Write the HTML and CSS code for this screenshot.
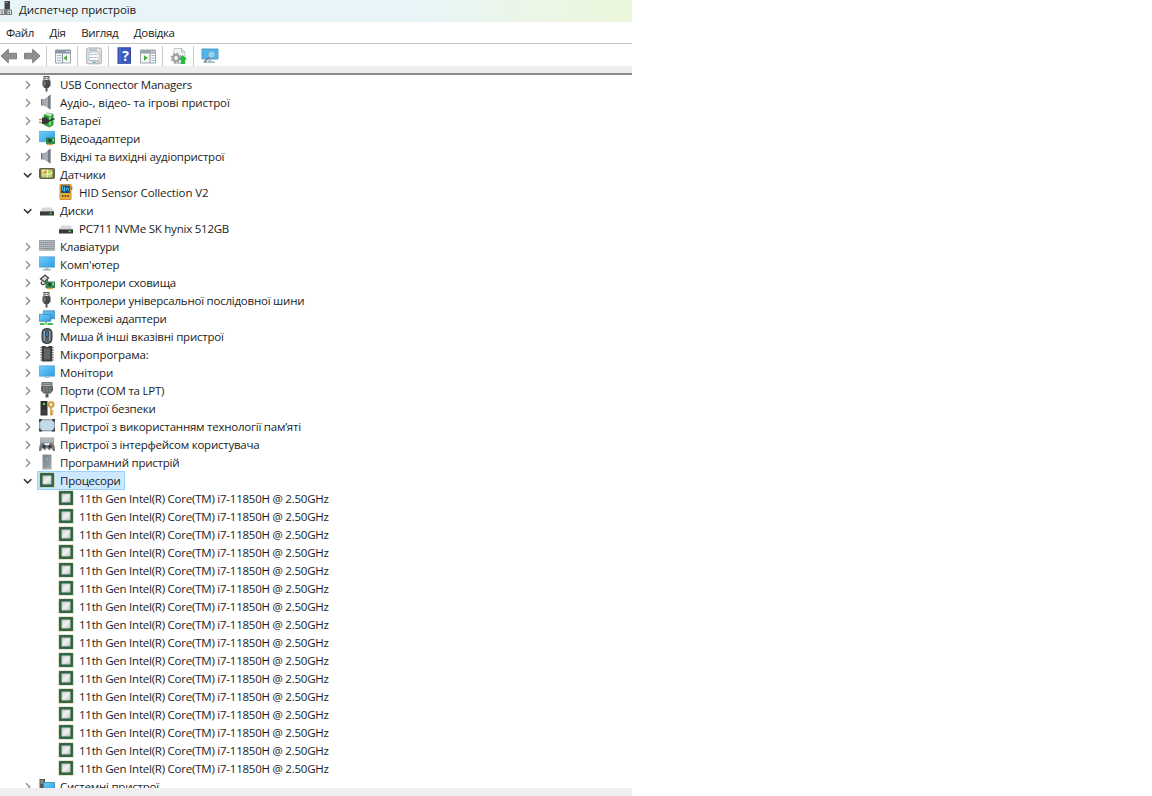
FILE: index.html
```html
<!DOCTYPE html>
<html lang="uk">
<head>
    <meta charset="UTF-8">
    <meta name="viewport" content="width=device-width, initial-scale=1.0">
    <title>Диспетчер пристроїв</title>
    <link rel="stylesheet" href="styles.css">
</head>
<body>
    <!-- Icon sprite -->
    <svg class="sprite">
        <defs>
            <linearGradient id="screen" x1="0" y1="0" x2="1" y2="1">
                <stop offset="0" stop-color="#6ccdfb"/><stop offset="1" stop-color="#2d9fe8"/>
            </linearGradient>
            <linearGradient id="metal" x1="0" y1="0" x2="1" y2="1">
                <stop offset="0" stop-color="#7d868c"/><stop offset=".5" stop-color="#89939a"/><stop offset="1" stop-color="#a5adb2"/>
            </linearGradient>
            <linearGradient id="die" x1="0" y1="0" x2="1" y2="1">
                <stop offset="0" stop-color="#cfd3d2"/><stop offset=".5" stop-color="#f0f2f1"/><stop offset="1" stop-color="#c3c8c6"/>
            </linearGradient>
        </defs>
        <symbol id="closed" viewBox="0 0 10 10"><path d="M3 1.300 6.800 5 3 8.700" fill="none" stroke="#8c8c8c" stroke-width="1.300"/></symbol>
        <symbol id="open" viewBox="0 0 10 10"><path d="M1 3.200 4.700 6.900l3.700-3.700" fill="none" stroke="#333" stroke-width="1.500"/></symbol>
        <symbol id="usb" viewBox="0 0 16 16">
            <rect x="5" y=".5" width="5" height="4" fill="#ddd" stroke="#555"/><path d="M6 2h1v1H6zM8.100 2h1v1h-1z" fill="#444"/>
            <path d="M3.500 4.500h8v5l-2 2.500h-4l-2-2.500z" fill="#4a4a4c"/><path d="M4.500 5h2v5h-2z" fill="#77797b"/><path d="M6.500 12h2v3.500h-2z" fill="#555"/>
        </symbol>
        <symbol id="speaker" viewBox="0 0 16 16">
            <path d="M2 5h4v6.500H2z" fill="#697078"/><path d="M5 5.500 11.500.5v15L5 11.500z" fill="#a8aeb3"/><path d="M9 2.500 11.500.5v15L9 14z" fill="#737b82"/>
            <path d="M4 5v6.500" stroke="#d5d9dc"/>
        </symbol>
        <symbol id="battery" viewBox="0 0 16 16">
            <path d="M4.500 3 8.500.5l6 1.500v11L10.500 15.500 5 13z" fill="#2fa13c"/><path d="M6 2.500 8.500.8l5 1.700-2.500 1.800z" fill="#d9e4da"/><path d="M10 5v9l2-1V4z" fill="#7bdc6b"/>
            <path d="M3 5.500h5l2.500 3-2.500 3.500H3z" fill="#38383a"/><path d="M0 7.500h3M0 10.500h3" stroke="#b49a4c" stroke-width="1.500"/><path d="M9 9c4 0 2-2.500 6.500-2" fill="none" stroke="#333" stroke-width="1.500"/>
        </symbol>
        <symbol id="display" viewBox="0 0 16 16">
            <path d="M.3 1.300h15.400v10.400H.3z" fill="url(#screen)" stroke="#4a94c0" stroke-width=".6"/>
            <path d="M7 7.500h9V14H7z" fill="#2e8550"/><path d="M9.500 9h3v3h-3z" fill="#19482b"/><path d="M13.500 8.500h1.500v3h-1.500z" fill="#9bd38b"/><path d="M8 14.500h6" stroke="#d0a83b" stroke-width="1.400"/>
        </symbol>
        <symbol id="sensors" viewBox="0 0 16 16">
            <rect x=".5" y="2.500" width="15" height="10" rx="1" fill="#716650" stroke="#625a49"/><path d="M2.500 3.500h11v8h-11z" fill="#b4cf6b"/>
            <path d="M2.500 3.500h4v3h-4z" fill="#efe08a"/><path d="M2.500 9 7 7.500l3 1 3.500-2M8.500 3.500v8" fill="none" stroke="#f6f0a0" stroke-width="1.200"/><circle cx="6" cy="6.500" r="1.100" fill="#d7533a"/>
        </symbol>
        <symbol id="hid" viewBox="0 0 16 16">
            <path d="M2 .5h11v15H2z" fill="#e9ae39" stroke="#c79540"/><path d="M3 1.500h9v7.500H3z" fill="#164f83"/><path d="M4.500 2.500v3.500l2 1V3M8 6.500l1.500-3 1.500 3" fill="none" stroke="#52c8f4"/>
            <path d="M4 11h1.500v2H4zM6.700 11h1.500v2H6.700zM9.300 11h1.500v2H9.300z" fill="#66501f"/><path d="M13.800 2v4" stroke="#596775"/>
        </symbol>
        <symbol id="disk" viewBox="0 0 16 16">
            <path d="M3.500 5.500h9l2.500 4H1z" fill="#d5d7d8"/><path d="M1 9h14v4.500H1z" fill="#39393b"/><path d="M1 9h14v.8H1z" fill="#8b8d8f"/><path d="M10.500 10.800h2.500v1.400h-2.500z" fill="#49d34a"/>
        </symbol>
        <symbol id="keyboard" viewBox="0 0 16 16">
            <path d="M.4 2.500h15.200v9.700H.4z" fill="#b4bbc1" stroke="#89929a" stroke-width=".8"/><path d="M1.500 4.500h13M1.500 6.500h13M1.500 8.500h13" stroke="#848e96" stroke-dasharray="1.500 .5"/><path d="M1.500 10.500h2M4.500 10.500h7M12.500 10.500h2" stroke="#848e96"/>
        </symbol>
        <symbol id="computer" viewBox="0 0 16 16">
            <path d="M.3 .8h15.400v10.400H.3z" fill="url(#screen)" stroke="#4a94c0" stroke-width=".6"/><path d="M6.500 11.500h3v2h-3z" fill="#abc4d2"/><path d="M4 13.800h8" stroke="#8da9b8" stroke-width="1.300"/>
        </symbol>
        <symbol id="storage" viewBox="0 0 16 16">
            <path d="m1.500 5 4.500-4 3.500 3-4 4z" fill="#d8dada" stroke="#414446" stroke-width="1.300"/><path d="M3 7.500c-2 2 0 4 2.500 2.500L9 6.500" fill="none" stroke="#414446" stroke-width="1.300"/>
            <path d="M6.500 7.500H16V14H6.500z" fill="#2f8550"/><path d="M9.500 9h2.500v3H9.500z" fill="#16432a"/><path d="M13.300 8.500h1.500v3h-1.500z" fill="#9bd38b"/><path d="M7.500 14.500H14" stroke="#d0a83b" stroke-width="1.400"/>
        </symbol>
        <symbol id="network" viewBox="0 0 16 16">
            <path d="M4.300.8h11.400v7.900H4.300z" fill="url(#screen)" stroke="#367da7" stroke-width=".7"/><path d="M.4 4.300h11.300v7H.4z" fill="url(#screen)" stroke="#367da7" stroke-width=".7"/>
            <path d="M6 11.500h2V14H6z" fill="#6cb86b"/><path d="M1 14h13" stroke="#31b64b" stroke-width="1.800"/><path d="M5 14h4" stroke="#8ee08d" stroke-width="2"/>
        </symbol>
        <symbol id="mouse" viewBox="0 0 16 16">
            <rect x="3" y=".6" width="10" height="14.800" rx="4" fill="#5d656d" stroke="#363a3f"/><path d="M5.300 3v9.500M10.700 3v9.500" stroke="#a8b3bd"/><rect x="6.800" y="2.500" width="2.400" height="6.500" rx="1.200" fill="#4289c2" stroke="#252b32" stroke-width=".7"/>
        </symbol>
        <symbol id="firmware" viewBox="0 0 16 16">
            <path d="M1.500 1.500h13M1.500 4h13M1.500 6.500h13M1.500 9h13M1.500 11.500h13M1.500 14h13" stroke="#666" stroke-width="1.600"/><path d="M3 0h3l1 1h2l1-1h3v15.500H3z" fill="#3d3e40"/><path d="M5 2.500h6v11H5z" fill="#626466"/>
        </symbol>
        <symbol id="monitor" viewBox="0 0 16 16">
            <path d="M.3 1.800h15.400v10.400H.3z" fill="url(#screen)" stroke="#4a94c0" stroke-width=".6"/><path d="M5 13.300h6" stroke="#a9bbc5"/>
        </symbol>
        <symbol id="port" viewBox="0 0 16 16">
            <path d="M3 .7h10v4H3z" fill="#b2b5b7" stroke="#515456"/><path d="M4.500 2.500h7" stroke="#444" stroke-dasharray="1 1"/><path d="M2 4.500h12v4l-2.500 3h-7L2 8.500z" fill="#626567"/><path d="M5 5v5M8 5v5M11 5v5" stroke="#898d90"/><path d="M6.500 11.500h3V15.500h-3z" fill="#55585a"/>
        </symbol>
        <symbol id="security" viewBox="0 0 16 16">
            <path d="M1.500 1h7v14.500h-7z" fill="#303234"/><path d="M4 3h2v2H4z" fill="#42e04c"/><path d="M2.500 11h5M2.500 13h5" stroke="#555"/>
            <circle cx="12" cy="4.500" r="2.400" fill="none" stroke="#d1a44a" stroke-width="2.400"/><path d="M12 7v8.500M12 11.500h2.500M12 14h2" stroke="#d1a44a" stroke-width="1.800"/>
        </symbol>
        <symbol id="memory" viewBox="0 0 16 16">
            <rect x=".7" y="1.800" width="14.600" height="11" rx="1.500" fill="#c2dcec" stroke="#7c8a94"/><path d="M.8 4V1.800H3M13 1.800h2.200V4M15.200 10.500v2.300H13M3 12.800H.8v-2.300" fill="none" stroke="#2e3439" stroke-width="1.400"/>
        </symbol>
        <symbol id="interface" viewBox="0 0 16 16">
            <path d="M1 1.500h14v6H1z" fill="#9ba3a9"/><path d="M2 3h12M2 5h12" stroke="#dde0e2" stroke-dasharray="1.300 .8"/><path d="M0 15c0-5 1-8 3-8h2l1 2h4l1-2h2c2 0 3 3 3 8h-2l-1.500-3-2 2.500L8 12l-2.500 2.500-2-2.500L2 15z" fill="#72797f"/>
            <circle cx="5" cy="10.500" r="1.700" fill="#373b3f"/><circle cx="11" cy="10.500" r="1.700" fill="#373b3f"/><path d="M13 8.500h1.500V10H13z" fill="#d86547"/>
        </symbol>
        <symbol id="software" viewBox="0 0 16 16">
            <path d="M3.500.5h9v15h-9z" fill="url(#metal)"/><path d="M3.500 15h9" stroke="#c3c9cd"/><path d="M7.300 4.500h1.500V6H7.300z" fill="#61ddd3"/>
        </symbol>
        <symbol id="cpu" viewBox="0 0 16 16">
            <path d="M1 1h14v14H1z" fill="#2d6a48" stroke="#bda859" stroke-width="1.200" stroke-dasharray="1 .6"/><path d="M1.200 1.200h13.600v13.600H1.200z" fill="#2c6546"/><path d="M3.800 3.800h8.400v8.400H3.800z" fill="url(#die)" stroke="#a2b3a7" stroke-width=".7"/>
        </symbol>
        <symbol id="system" viewBox="0 0 16 16">
            <path d="M.5 1H6v13H.5z" fill="#55585b"/><path d="M1.500 3h3M1.500 5h3" stroke="#b6babd"/><path d="M4.500 4.500h11v8h-11z" fill="url(#screen)" stroke="#337eac" stroke-width=".8"/>
        </symbol>
        <symbol id="back" viewBox="0 0 18 18"><path d="M1 9 8.300 2.300v4H16.500v5.500H8.300v4z" fill="#8f8f8f" stroke="#7c7c7c"/></symbol>
        <symbol id="forward" viewBox="0 0 18 18"><path d="M17 9 9.700 2.300v4H1.500v5.500h8.200v4z" fill="#8f8f8f" stroke="#7c7c7c"/></symbol>
        <symbol id="tree" viewBox="0 0 18 18">
            <path d="M1.500 3h15v13h-15z" fill="#f4f5f5" stroke="#a0a6ac"/><path d="M1 3h16v3.500H1z" fill="#8796a5"/><path d="M12 4.500h1.500M14.500 4.500H16" stroke="#eee"/><path d="M3 8.500h4M3 11h4M3 13.500h4" stroke="#a9bac6"/><path d="M8.500 6.500V16" stroke="#8b9299"/><path d="M13 8.200v5.500L9.500 11z" fill="#45a83b"/>
        </symbol>
        <symbol id="panel" viewBox="0 0 18 18">
            <path d="M1.500 3h15v13h-15z" fill="#f4f5f5" stroke="#a0a6ac"/><path d="M1 3h16v3.500H1z" fill="#9ba4ac"/><path d="M12 4.500h1.500M14.500 4.500H16" stroke="#eee"/><path d="M12.500 8.500h3M12.500 11h3M12.500 13.500h3" stroke="#a9bac6"/><path d="M11 6.500V16" stroke="#8b9299"/><path d="M5 8.200v5.500L8.800 11z" fill="#45a83b"/>
        </symbol>
        <symbol id="properties" viewBox="0 0 18 18">
            <rect x="1.700" y="1" width="14.600" height="15.800" rx="1.500" fill="#e6e8ea" stroke="#a4a9ad"/><path d="M4 5h10v8.500H4z" fill="#fff" stroke="#b5bbc0"/><path d="M4 3h8" stroke="#9ba1a6"/><path d="M5.500 7.500h2M5.500 10.500h2" stroke="#58a6be"/><path d="M8.500 7.500h4M8.500 10.500h4" stroke="#b4babf"/><path d="M7.500 15.200h3" stroke="#5bb0cc" stroke-width="1.500"/><path d="M11.500 15.200h3" stroke="#b3bcc1" stroke-width="1.500"/>
        </symbol>
        <symbol id="help" viewBox="0 0 18 18">
            <rect x="2" y=".8" width="12.500" height="15.500" fill="#3b5bc0" stroke="#2f4aa5"/><path d="M4 1v15" stroke="#5e79cf"/>
        </symbol>
        <symbol id="update" viewBox="0 0 18 18">
            <path d="M4 1.500h7.500L15 5v11.500H4z" fill="#f5f5f5" stroke="#c5c8ca"/><path d="M11.500 1.500V5H15" fill="none" stroke="#b5b8ba"/><circle cx="6" cy="11" r="3.100" fill="none" stroke="#a0a3a5" stroke-width="2.300"/><circle cx="6" cy="11" r="4.700" fill="none" stroke="#a0a3a5" stroke-width="1.500" stroke-dasharray="1.900 1.790"/><path d="m12.800 8 4.500 4.500H15V17h-4.200v-4.500H8.500z" fill="#28b843"/>
        </symbol>
        <symbol id="scan" viewBox="0 0 18 18">
            <path d="M1 2h16v10H1z" fill="#4fb5ea" stroke="#4f9cc8"/><path d="M7.500 12.500h3v2h-3zM4 14.500h10V16H4z" fill="#a3bcc9"/><circle cx="10.500" cy="7.500" r="3.600" fill="#8fd5f6" stroke="#6fa6c2"/><path d="M7.800 10.300 3 15.500" stroke="#677f8d" stroke-width="1.600"/>
        </symbol>
        <symbol id="app" viewBox="0 0 14 18">
            <path d="M4.500 1h5.500v8.500H4.500z" fill="#424548"/><path d="M5.500 2.500h2" stroke="#aaa"/><path d="M7 9v3" stroke="#777" stroke-width="2"/><path d="M0 9.500h12v5.500H0z" fill="#777b7e"/><path d="M0 10.500h4v3.500H0zM7.500 10.500h3.500v3.500H7.500z" fill="#e0e2e3"/><path d="M1.500 11.500h1v2h-1zM8.700 11.500h1v2h-1z" fill="#333"/>
        </symbol>
    </svg>

    <div class="window">
        <div class="titlebar">
            <svg class="app-icon"><use href="#app"/></svg>
            <span class="title">Диспетчер пристроїв</span>
        </div>
        <div class="menubar">
            <span>Файл</span>
            <span>Дія</span>
            <span>Вигляд</span>
            <span>Довідка</span>
        </div>
        <div class="toolbar">
            <svg class="tool"><use href="#back"/></svg>
            <svg class="tool next"><use href="#forward"/></svg>
            <i class="separator"></i>
            <svg class="tool"><use href="#tree"/></svg>
            <i class="separator"></i>
            <svg class="tool"><use href="#properties"/></svg>
            <i class="separator"></i>
            <span class="tool help"><svg><use href="#help"/></svg><b>?</b></span>
            <svg class="tool next"><use href="#panel"/></svg>
            <i class="separator"></i>
            <svg class="tool"><use href="#update"/></svg>
            <i class="separator"></i>
            <svg class="tool"><use href="#scan"/></svg>
        </div>
        <div class="strip"></div>

        <ul class="tree">
            <li class="row"><svg class="arrow"><use href="#closed"/></svg><svg class="icon"><use href="#usb"/></svg><span>USB Connector Managers</span></li>
            <li class="row"><svg class="arrow"><use href="#closed"/></svg><svg class="icon"><use href="#speaker"/></svg><span class="loose">Аудіо-, відео- та ігрові пристрої</span></li>
            <li class="row"><svg class="arrow"><use href="#closed"/></svg><svg class="icon"><use href="#battery"/></svg><span class="loose">Батареї</span></li>
            <li class="row"><svg class="arrow"><use href="#closed"/></svg><svg class="icon"><use href="#display"/></svg><span>Відеоадаптери</span></li>
            <li class="row"><svg class="arrow"><use href="#closed"/></svg><svg class="icon"><use href="#speaker"/></svg><span>Вхідні та вихідні аудіопристрої</span></li>
            <li class="row"><svg class="arrow"><use href="#open"/></svg><svg class="icon"><use href="#sensors"/></svg><span>Датчики</span></li>
            <li class="row child"><svg class="icon"><use href="#hid"/></svg><span class="loose">HID Sensor Collection V2</span></li>
            <li class="row"><svg class="arrow"><use href="#open"/></svg><svg class="icon"><use href="#disk"/></svg><span class="loose">Диски</span></li>
            <li class="row child"><svg class="icon"><use href="#disk"/></svg><span>PC711 NVMe SK hynix 512GB</span></li>
            <li class="row"><svg class="arrow"><use href="#closed"/></svg><svg class="icon"><use href="#keyboard"/></svg><span>Клавіатури</span></li>
            <li class="row"><svg class="arrow"><use href="#closed"/></svg><svg class="icon"><use href="#computer"/></svg><span class="loose">Комп'ютер</span></li>
            <li class="row"><svg class="arrow"><use href="#closed"/></svg><svg class="icon"><use href="#storage"/></svg><span>Контролери сховища</span></li>
            <li class="row"><svg class="arrow"><use href="#closed"/></svg><svg class="icon"><use href="#usb"/></svg><span>Контролери універсальної послідовної шини</span></li>
            <li class="row"><svg class="arrow"><use href="#closed"/></svg><svg class="icon"><use href="#network"/></svg><span>Мережеві адаптери</span></li>
            <li class="row"><svg class="arrow"><use href="#closed"/></svg><svg class="icon"><use href="#mouse"/></svg><span>Миша й інші вказівні пристрої</span></li>
            <li class="row"><svg class="arrow"><use href="#closed"/></svg><svg class="icon"><use href="#firmware"/></svg><span class="loose">Мікропрограма:</span></li>
            <li class="row"><svg class="arrow"><use href="#closed"/></svg><svg class="icon"><use href="#monitor"/></svg><span class="loose">Монітори</span></li>
            <li class="row"><svg class="arrow"><use href="#closed"/></svg><svg class="icon"><use href="#port"/></svg><span>Порти (COM та LPT)</span></li>
            <li class="row"><svg class="arrow"><use href="#closed"/></svg><svg class="icon"><use href="#security"/></svg><span>Пристрої безпеки</span></li>
            <li class="row"><svg class="arrow"><use href="#closed"/></svg><svg class="icon"><use href="#memory"/></svg><span>Пристрої з використанням технології пам’яті</span></li>
            <li class="row"><svg class="arrow"><use href="#closed"/></svg><svg class="icon"><use href="#interface"/></svg><span>Пристрої з інтерфейсом користувача</span></li>
            <li class="row"><svg class="arrow"><use href="#closed"/></svg><svg class="icon"><use href="#software"/></svg><span>Програмний пристрій</span></li>
            <li class="row selected"><svg class="arrow"><use href="#open"/></svg><svg class="icon"><use href="#cpu"/></svg><span>Процесори</span></li>
            <li class="row child"><svg class="icon"><use href="#cpu"/></svg><span>11th Gen Intel(R) Core(TM) i7-11850H @ 2.50GHz</span></li>
            <li class="row child"><svg class="icon"><use href="#cpu"/></svg><span>11th Gen Intel(R) Core(TM) i7-11850H @ 2.50GHz</span></li>
            <li class="row child"><svg class="icon"><use href="#cpu"/></svg><span>11th Gen Intel(R) Core(TM) i7-11850H @ 2.50GHz</span></li>
            <li class="row child"><svg class="icon"><use href="#cpu"/></svg><span>11th Gen Intel(R) Core(TM) i7-11850H @ 2.50GHz</span></li>
            <li class="row child"><svg class="icon"><use href="#cpu"/></svg><span>11th Gen Intel(R) Core(TM) i7-11850H @ 2.50GHz</span></li>
            <li class="row child"><svg class="icon"><use href="#cpu"/></svg><span>11th Gen Intel(R) Core(TM) i7-11850H @ 2.50GHz</span></li>
            <li class="row child"><svg class="icon"><use href="#cpu"/></svg><span>11th Gen Intel(R) Core(TM) i7-11850H @ 2.50GHz</span></li>
            <li class="row child"><svg class="icon"><use href="#cpu"/></svg><span>11th Gen Intel(R) Core(TM) i7-11850H @ 2.50GHz</span></li>
            <li class="row child"><svg class="icon"><use href="#cpu"/></svg><span>11th Gen Intel(R) Core(TM) i7-11850H @ 2.50GHz</span></li>
            <li class="row child"><svg class="icon"><use href="#cpu"/></svg><span>11th Gen Intel(R) Core(TM) i7-11850H @ 2.50GHz</span></li>
            <li class="row child"><svg class="icon"><use href="#cpu"/></svg><span>11th Gen Intel(R) Core(TM) i7-11850H @ 2.50GHz</span></li>
            <li class="row child"><svg class="icon"><use href="#cpu"/></svg><span>11th Gen Intel(R) Core(TM) i7-11850H @ 2.50GHz</span></li>
            <li class="row child"><svg class="icon"><use href="#cpu"/></svg><span>11th Gen Intel(R) Core(TM) i7-11850H @ 2.50GHz</span></li>
            <li class="row child"><svg class="icon"><use href="#cpu"/></svg><span>11th Gen Intel(R) Core(TM) i7-11850H @ 2.50GHz</span></li>
            <li class="row child"><svg class="icon"><use href="#cpu"/></svg><span>11th Gen Intel(R) Core(TM) i7-11850H @ 2.50GHz</span></li>
            <li class="row child"><svg class="icon"><use href="#cpu"/></svg><span>11th Gen Intel(R) Core(TM) i7-11850H @ 2.50GHz</span></li>
            <li class="row"><svg class="arrow"><use href="#closed"/></svg><svg class="icon"><use href="#system"/></svg><span>Системні пристрої</span></li>
        </ul>
        <div class="statusbar"></div>
    </div>
</body>
</html>
```
FILE: styles.css
```css
* {
    box-sizing: border-box;
}
body {
    margin: 0;
    background: #fff;
    color: #1c1c1c;
    font-family: 'Open Sans', 'Noto Sans', sans-serif;
    font-size: 11.5px;
    letter-spacing: -0.23px;
    overflow: hidden;
}
.sprite {
    position: absolute;
    width: 0;
    height: 0;
}
.window {
    width: 632px;
    height: 796px;
    display: flex;
    flex-direction: column;
    overflow: hidden;
}
.titlebar {
    height: 22px;
    flex: none;
    display: flex;
    align-items: center;
    padding-bottom: 4px;
    letter-spacing: -0.1px;
    background: linear-gradient(90deg, #e8f5f8 0%, #e8f5f8 65%, #ebf6e9 82%, #ecf7dc 100%);
}
.app-icon {
    width: 14px;
    height: 18px;
    margin-right: 5px;
}
.menubar {
    height: 22px;
    flex: none;
    display: flex;
    align-items: center;
    gap: 15.5px;
    padding-left: 6px;
    letter-spacing: -0.35px;
    border-bottom: 1px solid #c4c4c4;
}
.toolbar {
    height: 22px;
    flex: none;
    display: flex;
    align-items: center;
    padding-top: 2px;
}
.tool {
    width: 18px;
    height: 18px;
    flex: none;
}
.tool.next {
    margin-left: 5px;
}
.separator {
    width: 1px;
    height: 20px;
    margin: 0 7px 0 5px;
    background: #c8c8c8;
}
.help {
    display: grid;
    place-items: center;
}
.help svg,
.help b {
    grid-area: 1 / 1;
}
.help svg {
    width: 18px;
    height: 18px;
}
.help b {
    color: #fff;
    font-size: 14px;
    line-height: 18px;
    padding-left: 1px;
}
.strip {
    height: 9px;
    flex: none;
    background: #ededed;
    border-bottom: 2px solid #8a8a8a;
}
.tree {
    flex: 1;
    min-height: 0;
    margin: 0;
    padding: 1px 0 0;
    list-style: none;
    overflow: hidden;
}
.row {
    height: 18px;
    display: flex;
    align-items: center;
    padding-left: 23px;
    line-height: 18px;
    white-space: nowrap;
}
.row.child {
    padding-left: 58px;
}
.row span.loose {
    letter-spacing: -0.12px;
}
.arrow {
    width: 10px;
    height: 10px;
    margin-right: 6px;
}
.icon {
    width: 16px;
    height: 16px;
    margin: -2px 5px 0 0;
}
.selected {
    width: 125px;
    background: linear-gradient(#cce8ff, #cce8ff) 37px 0 no-repeat;
    position: relative;
}
.selected::after {
    content: '';
    position: absolute;
    inset: -1px 0 0 37px;
    border: 1px solid #99d1ff;
}
.statusbar {
    height: 8px;
    flex: none;
    background: #efefef;
}
```
